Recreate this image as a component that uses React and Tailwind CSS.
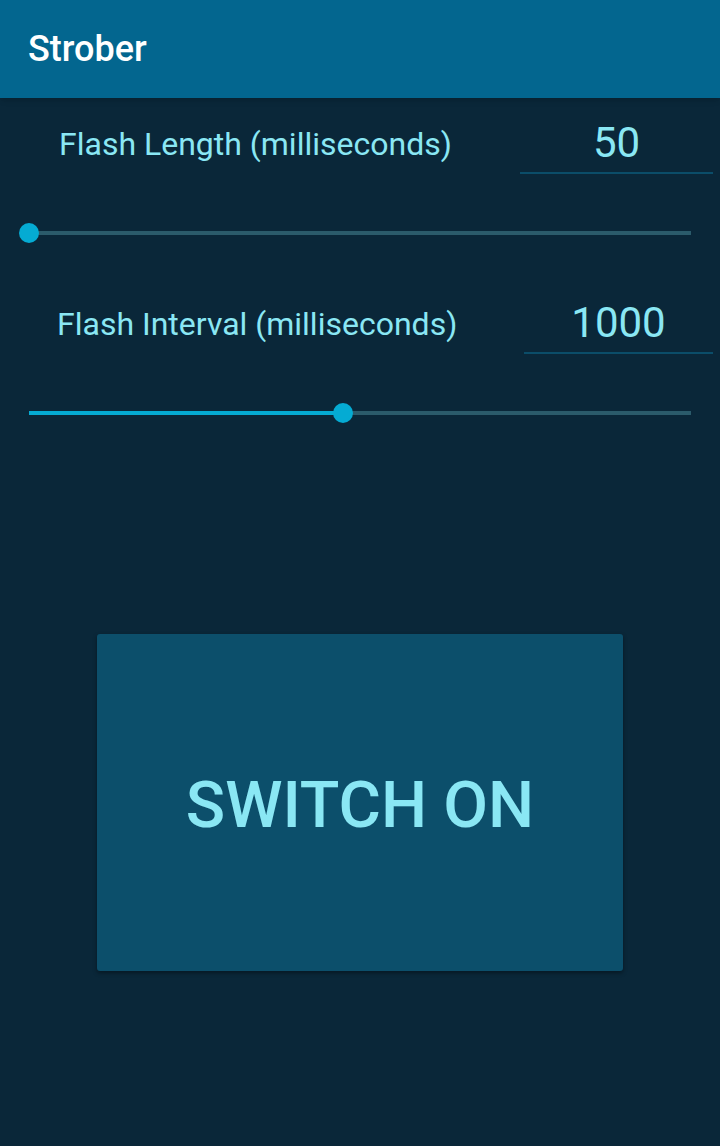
import React from 'react';

// Simple slider: track, filled part and round thumb
const Slider = ({ pct }) => (
  <div className="relative mx-[29px] h-[40px] flex items-center">
    <div className="w-full h-[4px] bg-[#2b5b6b]" />
    <div className="absolute left-0 top-[18px] h-[4px] bg-[#05abd3]" style={{ width: `${pct}%` }} />
    <div
      className="absolute top-[10px] w-[20px] h-[20px] -ml-[10px] rounded-full bg-[#05abd3]"
      style={{ left: `${pct}%` }}
    />
  </div>
);

const Row = ({ label, value, labelLeft, boxWidth }) => (
  <div className="flex items-center h-[76px]">
    <div className={`flex-1 pt-[16px] text-[32px] text-[#8ae7f4] ${labelLeft}`}>{label}</div>
    <div
      className={`${boxWidth} mr-[7px] h-full border-b-2 border-[#0b4d69] flex items-center justify-center pt-[14px] text-[42px] text-[#8ae7f4]`}
    >
      {value}
    </div>
  </div>
);

export default function App() {
  return (
    <div className="w-[720px] h-[1146px] bg-[#0a2739] flex flex-col" style={{ fontFamily: 'Roboto, sans-serif' }}>
      <header className="h-[98px] bg-[#03668f] flex items-center pl-[28px] shadow-md">
        <h1 className="text-[36px] font-medium text-white">Strober</h1>
      </header>

      <Row label="Flash Length (milliseconds)" value="50" labelLeft="pl-[59px]" boxWidth="w-[193px]" />
      <div className="mt-[39px]">
        <Slider pct={0} />
      </div>

      <div className="mt-[25px]">
        <Row label="Flash Interval (milliseconds)" value="1000" labelLeft="pl-[57px]" boxWidth="w-[189px]" />
      </div>
      <div className="mt-[39px]">
        <Slider pct={47.4} />
      </div>

      <div className="mt-[201px] flex justify-center">
        <button className="w-[526px] h-[337px] pt-[6px] rounded-[3px] bg-[#0c4f6b] shadow-[0_2px_4px_rgba(0,0,0,0.4)] text-[65px] font-medium text-[#8ae7f4] flex items-center justify-center">
          SWITCH ON
        </button>
      </div>
    </div>
  );
}
